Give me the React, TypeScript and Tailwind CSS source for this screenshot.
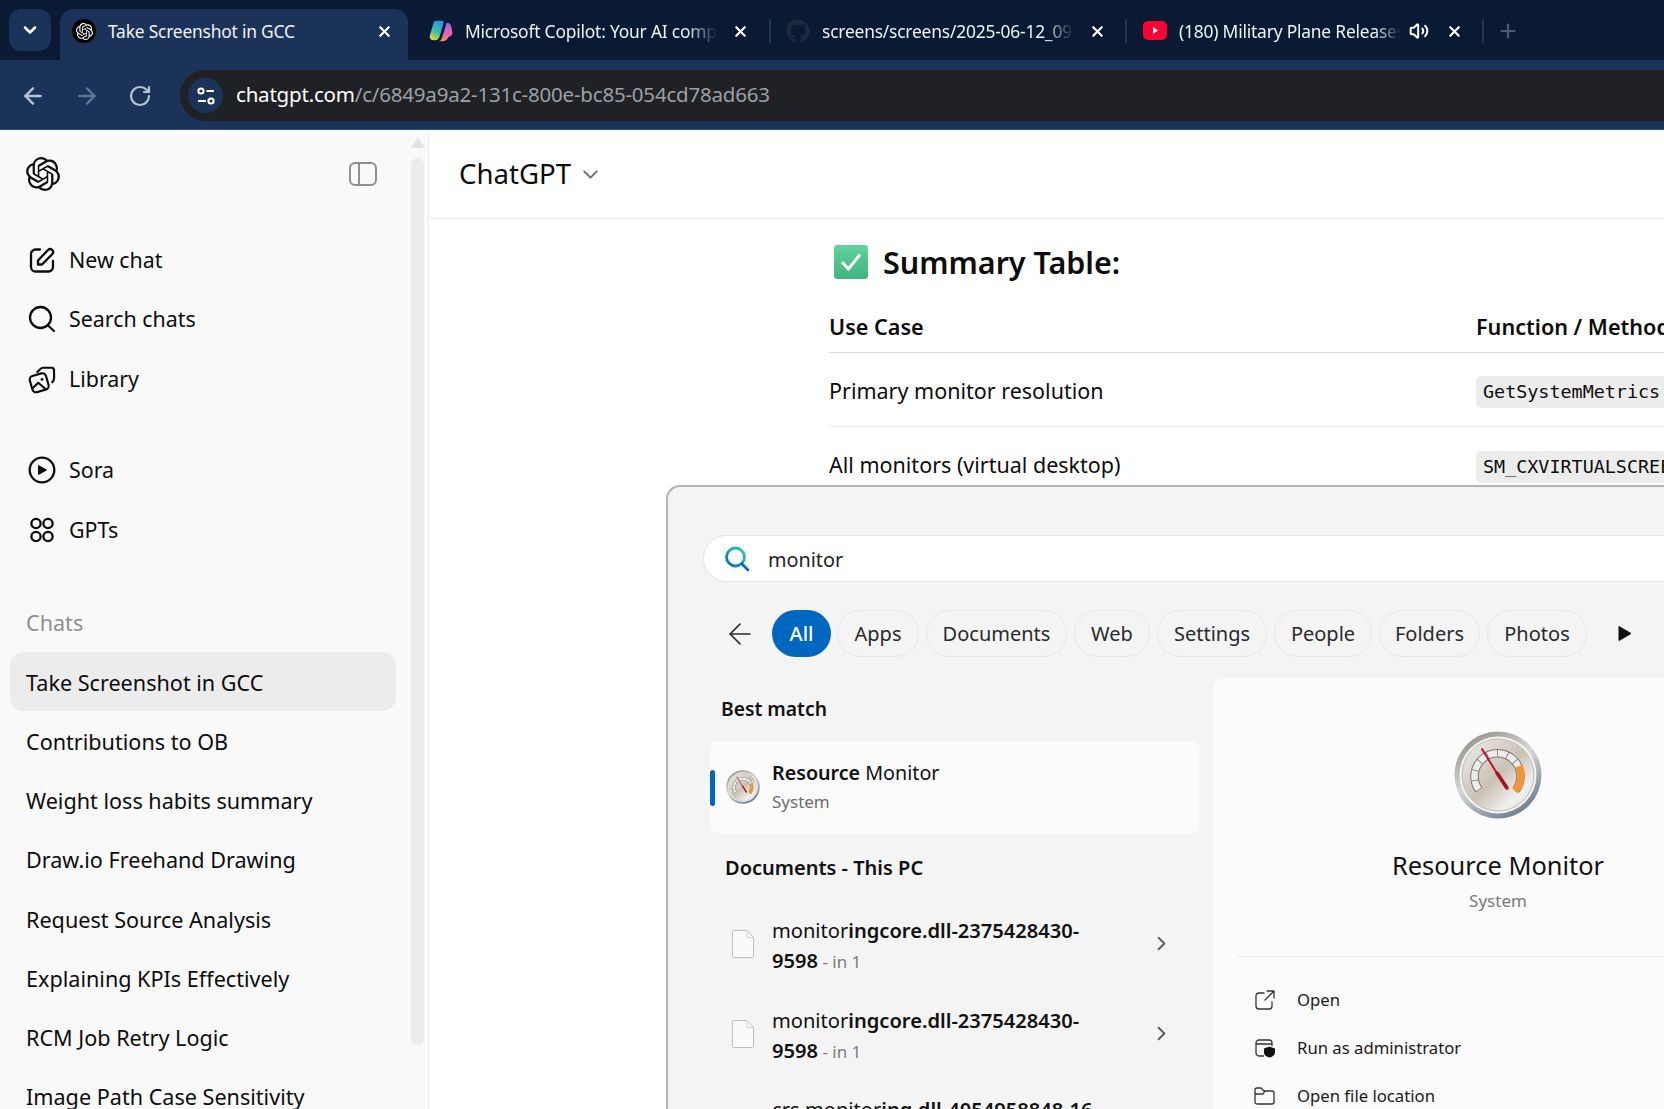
import { ChevronDown, ChevronRight, ArrowLeft, ArrowRight, RotateCw, X, Plus, Volume2 } from 'lucide-react'
import { SiOpenai } from 'react-icons/si'
import { FaGithub } from 'react-icons/fa'
import type { ReactNode } from 'react'

const ui = "font-['Noto_Sans','Open_Sans',sans-serif]"

function SettingsGlyph() {
  return (
    <svg width="20" height="20" viewBox="0 0 20 20" fill="none" stroke="white" strokeWidth="2">
      <circle cx="5" cy="5" r="2.6" />
      <path d="M10.5 5H18M2 15h8" />
      <circle cx="15" cy="15" r="2.6" />
    </svg>
  )
}

function CopilotIcon() {
  return (
    <svg width="26" height="24" viewBox="0 0 26 24">
      <defs>
        <linearGradient id="cpA" x1="0.7" y1="0" x2="0.2" y2="1">
          <stop offset="0" stopColor="#2a8ff0" />
          <stop offset="0.55" stopColor="#35c6a0" />
          <stop offset="1" stopColor="#f2d531" />
        </linearGradient>
        <linearGradient id="cpB" x1="0.6" y1="0" x2="0.4" y2="1">
          <stop offset="0" stopColor="#9a63ee" />
          <stop offset="0.55" stopColor="#ee5fb4" />
          <stop offset="1" stopColor="#f8913a" />
        </linearGradient>
      </defs>
      <path d="M8 1h6c2 0 2 2 1.500 3.500L11.500 18c-.6 2-2 4-4.500 4H5C1.500 22 .3 19.500 1 17L4.500 4.500C5 2.500 6 1 8 1z" fill="url(#cpA)" />
      <path d="M19 3c3 0 4.500 1.500 5.200 4.500l1 5c.6 3.500-1 5.500-3.700 5.500l-1.500 2.500c-.8 1.300-2 2.500-4 2.500h-6c2 0 3-1 3.800-3l4.200-13c.5-2 1-4 1-4z" fill="url(#cpB)" />
    </svg>
  )
}

function YouTubeIcon() {
  return (
    <svg width="24" height="24" viewBox="0 0 24 24">
      <rect x="0" y="2" width="24" height="19" rx="5" fill="#ff0033" />
      <path d="M10 8l5 3.500-5 3.500z" fill="white" />
    </svg>
  )
}

function CloseTab() {
  return <X size={17} strokeWidth={3} className="text-white shrink-0" />
}

function TabSeparator() {
  return <div className="w-[2px] h-[24px] bg-[#1f3656] shrink-0" />
}

function Tab({ icon, title, width, end }: { icon: ReactNode; title: string; width: string; end?: ReactNode }) {
  return (
    <div className="flex items-center h-[44px] shrink-0">
      <div className="w-[24px] h-[24px] flex items-center justify-center shrink-0">{icon}</div>
      <span className={`ml-[12px] ${width} overflow-hidden whitespace-nowrap text-[17.4px] tracking-[-0.2px] text-[#eef1f6] [mask-image:linear-gradient(to_right,black_88%,transparent)]`}>
        {title}
      </span>
      {end}
    </div>
  )
}

function TabStrip() {
  return (
    <div className="h-[60px] bg-[#0a1a33] flex items-start pt-[9px] pl-[9px] shrink-0">
      <div className="w-[42px] h-[42px] rounded-[12px] bg-[#1b3358] flex items-center justify-center">
        <ChevronDown size={20} strokeWidth={3} className="text-white" />
      </div>
      <div className="ml-[9px] w-[348px] h-[51px] rounded-t-[14px] bg-[#1b3358] flex items-center pb-[7px] pl-[12px] pr-[15px] text-[17.4px] tracking-[-0.2px] text-[#eef1f6]">
        <div className="w-[24px] h-[24px] rounded-full bg-black flex items-center justify-center">
          <SiOpenai size={17} className="text-white" />
        </div>
        <span className="ml-[12px] flex-1">Take Screenshot in GCC</span>
        <CloseTab />
      </div>
      <div className="ml-[21px] flex items-center h-[44px]">
        <Tab icon={<CopilotIcon />} title="Microsoft Copilot: Your AI companion" width="w-[252px]" />
        <div className="ml-[15px] mr-[15px] flex items-center gap-[20px]">
          <CloseTab />
          <TabSeparator />
        </div>
        <Tab icon={<FaGithub size={24} className="text-[#1c2a3f]" />} title="screens/screens/2025-06-12_09-10" width="w-[252px]" />
        <div className="ml-[15px] mr-[16px] flex items-center gap-[19px]">
          <CloseTab />
          <TabSeparator />
        </div>
        <Tab icon={<YouTubeIcon />} title="(180) Military Plane Releases Flares" width="w-[222px]" />
        <Volume2 size={20} strokeWidth={2.4} className="ml-[8px] text-white" />
        <div className="ml-[17px] flex items-center gap-[19px]">
          <CloseTab />
          <TabSeparator />
        </div>
        <Plus size={22} strokeWidth={2.4} className="ml-[13px] text-[#4a5a72]" />
      </div>
    </div>
  )
}

function Toolbar() {
  return (
    <div className="h-[70px] bg-[#1b3358] border-b-[1px] border-[#3a4d6c] flex items-start pt-[10px] shrink-0">
      <div className="flex items-center h-[51px] pl-[20px] gap-[28px] w-[180px]">
        <ArrowLeft size={26} strokeWidth={2.2} className="text-[#b6c4da]" />
        <ArrowRight size={26} strokeWidth={2.2} className="text-[#5f7594]" />
        <RotateCw size={24} strokeWidth={2.2} className="text-[#b6c4da]" />
      </div>
      <div className="flex-1 h-[51px] bg-[#202124] rounded-l-full flex items-center pl-[8px]">
        <div className="w-[35px] h-[35px] rounded-full bg-[#1b3358] flex items-center justify-center">
          <SettingsGlyph />
        </div>
        <div className="ml-[13px] pb-[2px] text-[20.5px] tracking-[-0.2px] whitespace-nowrap">
          <span className="text-white">chatgpt.com</span>
          <span className="text-[#9aa0a6]">/c/6849a9a2-131c-800e-bc85-054cd78ad663</span>
        </div>
      </div>
    </div>
  )
}

function NewChatIcon() {
  return (
    <svg width="28" height="28" viewBox="0 0 28 28" fill="none" stroke="#0d0d0d" strokeWidth="2.3" strokeLinecap="round" strokeLinejoin="round">
      <path d="M12 3.500H7.500A4.500 4.500 0 0 0 3 8v13a4.500 4.500 0 0 0 4.500 4.500h13A4.500 4.500 0 0 0 25 21v-6" />
      <path d="M10 18.500v-4L20 4a3 3 0 0 1 4.200 0 3 3 0 0 1 0 4.200L14 18.500z" />
    </svg>
  )
}

function SearchIcon() {
  return (
    <svg width="28" height="28" viewBox="0 0 28 28" fill="none" stroke="#0d0d0d" strokeWidth="2.3" strokeLinecap="round">
      <circle cx="12.500" cy="12.500" r="10.500" />
      <path d="M20 20.500l6 5.500" />
    </svg>
  )
}

function LibraryIcon() {
  return (
    <svg width="30" height="30" viewBox="0 0 30 30" fill="none" stroke="#0d0d0d" strokeWidth="2.3" strokeLinecap="round" strokeLinejoin="round">
      <path d="M10 7.500 13 4.500c1-1 2-1.500 3-1.500h9c1.500-.2 2.500.5 2.800 2l.2 9c0 1.800-.8 3.200-2 4.500" />
      <rect x="3" y="10" width="18" height="18" rx="4" transform="rotate(-16 12 19)" />
      <path d="M5 25l6-6 8 7" />
      <circle cx="15" cy="15.500" r="1.500" fill="#0d0d0d" stroke="none" />
    </svg>
  )
}

function SoraIcon() {
  return (
    <svg width="28" height="28" viewBox="0 0 28 28" fill="none">
      <circle cx="14" cy="14" r="12.300" stroke="#0d0d0d" strokeWidth="2.3" />
      <path d="M10.500 9.500v9l8-4.500z" fill="#0d0d0d" stroke="#0d0d0d" strokeLinejoin="round" />
    </svg>
  )
}

function GptsIcon() {
  return (
    <svg width="28" height="28" viewBox="0 0 28 28" fill="none" stroke="#0d0d0d" strokeWidth="2.3">
      <circle cx="8" cy="7.500" r="4.600" />
      <circle cx="20" cy="7.500" r="4.600" />
      <circle cx="8" cy="20.500" r="4.600" />
      <circle cx="20" cy="20.500" r="4.600" />
    </svg>
  )
}

function PanelIcon() {
  return (
    <svg width="28" height="24" viewBox="0 0 28 24" fill="none" stroke="#8f8f8f" strokeWidth="2">
      <rect x="1" y="1" width="26" height="22" rx="5" />
      <path d="M10 1v22" />
    </svg>
  )
}

function NavRow({ icon, label }: { icon: ReactNode; label: string }) {
  return (
    <div className="h-[59.5px] flex items-center pl-[28px] text-[#0d0d0d]">
      <div className="w-[28px] flex justify-center shrink-0">{icon}</div>
      <span className="ml-[13px] text-[21.4px]">{label}</span>
    </div>
  )
}

const chats = [
  'Take Screenshot in GCC',
  'Contributions to OB',
  'Weight loss habits summary',
  'Draw.io Freehand Drawing',
  'Request Source Analysis',
  'Explaining KPIs Effectively',
  'RCM Job Retry Logic',
  'Image Path Case Sensitivity',
]

function Sidebar() {
  return (
    <aside className="w-[429px] shrink-0 bg-[#f9f9f9] border-r border-[#ececec] flex overflow-hidden">
      <div className="w-[411px] shrink-0">
        <div className="h-[100px] pt-[27px] pl-[26px] pr-[34px] flex items-start justify-between">
          <SiOpenai size={34} className="text-[#0d0d0d]" />
          <div className="pt-[5px]">
            <PanelIcon />
          </div>
        </div>
        <NavRow icon={<NewChatIcon />} label="New chat" />
        <NavRow icon={<SearchIcon />} label="Search chats" />
        <NavRow icon={<LibraryIcon />} label="Library" />
        <div className="h-[32px]" />
        <NavRow icon={<SoraIcon />} label="Sora" />
        <NavRow icon={<GptsIcon />} label="GPTs" />
        <div className="h-[33px]" />
        <div className="h-[59px] flex items-center pt-[2px] pl-[26px] text-[21.6px] text-[#8f8f8f]">Chats</div>
        <div className="pl-[10px] pr-[15px]">
          {chats.map((c, i) => (
            <div
              key={c}
              className={`h-[59.2px] flex items-center pl-[16px] pt-[4px] rounded-[14px] text-[21.6px] text-[#0d0d0d] whitespace-nowrap ${i === 0 ? 'bg-[#ececec]' : ''}`}
            >
              {c}
            </div>
          ))}
        </div>
      </div>
      <div className="w-[13px] shrink-0 flex flex-col items-center pt-[7px]">
        <div className="w-0 h-0 border-x-[7px] border-x-transparent border-b-[11px] border-b-[#e3e3e3]" />
        <div className="mt-[10px] w-[13px] h-[887px] rounded-full bg-[#ececec]" />
      </div>
    </aside>
  )
}

function CheckEmoji() {
  return (
    <svg width="36" height="36" viewBox="0 0 36 36" className="shrink-0">
      <defs>
        <linearGradient id="checkBg" x1="0" y1="0" x2="0" y2="1">
          <stop offset="0" stopColor="#62d39c" />
          <stop offset="1" stopColor="#3fb57d" />
        </linearGradient>
      </defs>
      <rect x="1" y="1" width="34" height="34" rx="3.500" fill="url(#checkBg)" />
      <path d="M9 18l6.500 7L27 10.500" fill="none" stroke="white" strokeWidth="3" />
    </svg>
  )
}

function CodeChip({ children }: { children: string }) {
  return (
    <span className="w-[300px] h-[32px] rounded-[5px] bg-[#ececec] pl-[7px] flex items-center font-['DejaVu_Sans_Mono',monospace] text-[18.4px] text-[#0d0d0d] whitespace-nowrap">
      {children}
    </span>
  )
}

function MainPane() {
  return (
    <main className="flex-1 min-w-0 bg-white overflow-hidden">
      <div className="h-[89px] border-b border-[#ececec] flex items-center pl-[30px] text-[#0d0d0d]">
        <span className="text-[27.6px]">ChatGPT</span>
        <ChevronDown size={25} strokeWidth={1.8} className="ml-[7px] mt-[1px] text-[#6b6b6b]" />
      </div>
      <div className="pl-[400px] w-[1400px]">
        <div className="pt-[25px] flex items-center pl-[4px] text-[#0d0d0d]">
          <CheckEmoji />
          <h2 className="ml-[14px] text-[30.5px] font-semibold leading-[36px]">Summary Table:</h2>
        </div>
        <div className="mt-[20px] grid grid-cols-[647px_1fr] text-[#0d0d0d]">
          <div className="h-[53px] pt-[3px] flex items-center border-b border-[#d9d9d9] text-[21.6px] font-semibold">Use Case</div>
          <div className="h-[53px] pt-[3px] flex items-center border-b border-[#d9d9d9] text-[21.6px] font-semibold whitespace-nowrap">Function / Method</div>
          <div className="h-[74px] pt-[4px] flex items-center border-b border-[#ececec] text-[21.5px]">Primary monitor resolution</div>
          <div className="h-[74px] pt-[5px] flex items-center border-b border-[#ececec]">
            <CodeChip>GetSystemMetrics</CodeChip>
          </div>
          <div className="h-[74px] pt-[2px] flex items-center text-[21.5px]">All monitors (virtual desktop)</div>
          <div className="h-[74px] pt-[5px] flex items-center">
            <CodeChip>SM_CXVIRTUALSCREEN</CodeChip>
          </div>
        </div>
      </div>
    </main>
  )
}

function GaugeIcon({ id, size }: { id: string; size: number }) {
  return (
    <svg width={size} height={size} viewBox="0 0 88 88">
      <defs>
        <linearGradient id={`${id}Rim`} x1="0.2" y1="0" x2="0.8" y2="1">
          <stop offset="0" stopColor="#8f8f8b" />
          <stop offset="0.45" stopColor="#d8d8d4" />
          <stop offset="1" stopColor="#5f7488" />
        </linearGradient>
        <linearGradient id={`${id}Face`} x1="0" y1="0" x2="1" y2="1">
          <stop offset="0" stopColor="#f1f0ec" />
          <stop offset="0.5" stopColor="#cbc1b5" />
          <stop offset="0.78" stopColor="#f0f0ec" />
          <stop offset="1" stopColor="#d5d3cf" />
        </linearGradient>
      </defs>
      <circle cx="44" cy="44" r="43.500" fill={`url(#${id}Rim)`} />
      <circle cx="44" cy="44" r="38.500" fill="#f3f3f0" />
      <circle cx="44" cy="44" r="36" fill={`url(#${id}Face)`} stroke="#bdbdb9" />
      <path d="M25 59A23 23 0 1 1 62 59" fill="none" stroke="#77777a" strokeWidth="8.500" />
      <path d="M25 59A23 23 0 1 1 62 59" fill="none" stroke="#eeede9" strokeWidth="6.500" />
      <path d="M25 59A23 23 0 1 1 62 59" fill="none" stroke="#77777a" strokeWidth="7" strokeDasharray="0.8 9.200" />
      <path d="M65 35A23 23 0 0 1 61 60" fill="none" stroke="#f0953a" strokeWidth="7.500" />
      <path d="M28 18L52 57" stroke="#c5102a" strokeWidth="2" strokeLinecap="round" />
      <path d="M43 42L53 57" stroke="#b00d25" strokeWidth="3.500" strokeLinecap="round" />
    </svg>
  )
}

function FileIcon() {
  return (
    <svg width="22" height="28" viewBox="0 0 22 28" fill="#fafafa" stroke="#bdbdbd" className="shrink-0 mb-[5px]">
      <path d="M.5 1.500a1 1 0 0 1 1-1H15l6.500 7v19a1 1 0 0 1-1 1h-19a1 1 0 0 1-1-1z" />
      <path d="M15 .5v7h6.500" fill="none" stroke="#d4d4d4" />
    </svg>
  )
}

function SearchGlyph() {
  return (
    <svg width="26" height="26" viewBox="0 0 26 26" fill="none" strokeWidth="2.800" strokeLinecap="round">
      <defs>
        <linearGradient id="searchStroke" x1="1" y1="0" x2="0" y2="1">
          <stop offset="0" stopColor="#39d08a" />
          <stop offset="0.5" stopColor="#1a9fd0" />
          <stop offset="1" stopColor="#0067c0" />
        </linearGradient>
      </defs>
      <circle cx="11.500" cy="11" r="9" stroke="url(#searchStroke)" />
      <path d="M18 18l6 6" stroke="#0067c0" />
    </svg>
  )
}

function FileRow({ name, rest }: { name: string; rest: string }) {
  return (
    <div className="h-[90px] flex items-center pl-[22px] pr-[26px] shrink-0">
      <FileIcon />
      <div className="ml-[18px] flex-1 text-[20.1px] leading-[30px] text-[#111]">
        <div>
          monitor<span className="font-semibold">{name}</span>
        </div>
        <div>
          <span className="font-semibold">{rest}</span>
          <span className="text-[17px] text-[#7c7c7c]"> - in 1</span>
        </div>
      </div>
      <ChevronRight size={23} strokeWidth={2} className="mb-[5px] text-[#5c5c5c]" />
    </div>
  )
}

function ActionRow({ icon, label }: { icon: ReactNode; label: string }) {
  return (
    <div className="h-[48px] flex items-center pl-[40px] text-[16.7px] text-[#1a1a1a]">
      <div className="w-[24px] flex justify-center shrink-0">{icon}</div>
      <span className="ml-[20px]">{label}</span>
    </div>
  )
}

const filters = [
  ['Apps', 'w-[82px]'],
  ['Documents', 'w-[141px]'],
  ['Web', 'w-[76px]'],
  ['Settings', 'w-[110px]'],
  ['People', 'w-[98px]'],
  ['Folders', 'w-[101px]'],
  ['Photos', 'w-[100px]'],
]

function StartMenu() {
  return (
    <div className="absolute left-[666px] top-[485px] w-[1100px] h-[700px] bg-[#f4f4f4] rounded-tl-[14px] border-l-[2px] border-t-[2px] border-[#b4b4b4] overflow-hidden">
      <div className="mt-[48px] ml-[35px] h-[47px] bg-white rounded-l-full border border-[#e4e4e4] flex items-center pl-[20px]">
        <SearchGlyph />
        <span className="ml-[18px] pt-[3px] text-[19.8px] text-[#222]">monitor</span>
      </div>
      <div className="mt-[28px] ml-[55px] flex items-center h-[47px] text-[20px] text-[#2a2a2a]">
        <ArrowLeft size={34} strokeWidth={1.1} className="mr-[15px] shrink-0" />
        <div className="w-[59px] h-[47px] rounded-full bg-[#0067c0] text-white font-medium flex items-center justify-center">All</div>
        <div className="ml-[6px] flex gap-[7px]">
          {filters.map(([label, width]) => (
            <div key={label} className={`${width} h-[47px] rounded-full border border-[#e6e6e6] flex items-center justify-center`}>
              {label}
            </div>
          ))}
        </div>
        <svg width="14" height="17" viewBox="0 0 14 17" className="ml-[31px]">
          <path d="M1 1.500v14L13 8.500z" fill="#111" stroke="#111" strokeLinejoin="round" />
        </svg>
      </div>
      <div className="mt-[21px] flex items-start">
        <div className="w-[489px] ml-[42px] shrink-0 pt-[15px]">
          <div className="h-[32px] pl-[11px] flex items-center text-[19.3px] font-semibold text-[#111]">Best match</div>
          <div className="mt-[16px] h-[92px] rounded-[6px] bg-[#fbfbfb] flex items-center relative pl-[16px]">
            <div className="absolute left-0 top-[29px] w-[5px] h-[36px] rounded-full bg-[#0067c0]" />
            <GaugeIcon id="gaugeSmall" size={34} />
            <div className="ml-[12px] mt-[-1px]">
              <div className="text-[19.7px] leading-[30px] text-[#111]">
                <span className="font-semibold">Resource</span> Monitor
              </div>
              <div className="text-[17px] leading-[28px] text-[#6e6e6e]">System</div>
            </div>
          </div>
          <div className="mt-[19px] h-[32px] pl-[15px] flex items-center text-[20px] font-semibold text-[#111]">Documents - This PC</div>
          <div className="mt-[17px]">
            <FileRow name="ingcore.dll-2375428430-" rest="9598" />
            <FileRow name="ingcore.dll-2375428430-" rest="9598" />
            <div className="pl-[62px] pt-[14px] text-[20.1px] leading-[30px] text-[#111] whitespace-nowrap">
              crs.monitor<span className="font-semibold">ing.dll-4054958848-16</span>
            </div>
          </div>
        </div>
        <div className="ml-[14px] flex-1 h-[500px] bg-[#fbfbfb] rounded-tl-[12px]">
          <div className="w-[570px]">
            <div className="pt-[53px] flex flex-col items-center">
              <GaugeIcon id="gaugeLarge" size={88} />
              <div className="mt-[29px] text-[25.4px] leading-[34px] text-[#111]">Resource Monitor</div>
              <div className="mt-[7px] text-[17px] leading-[24px] text-[#7a7a7a]">System</div>
            </div>
            <div className="mt-[43px] ml-[24px] w-[546px] border-t border-[#ebebeb]" />
            <div className="mt-[19px]">
              <ActionRow
                label="Open"
                icon={
                  <svg width="20" height="20" viewBox="0 0 20 20" fill="none" stroke="#333" strokeWidth="1.300" strokeLinecap="round" strokeLinejoin="round">
                    <path d="M9 3H4a3 3 0 0 0-3 3v10a3 3 0 0 0 3 3h10a3 3 0 0 0 3-3v-4" />
                    <path d="M12 1h7v7M19 1l-9 9" />
                  </svg>
                }
              />
              <ActionRow
                label="Run as administrator"
                icon={
                  <svg width="21" height="20" viewBox="0 0 21 20" fill="none" stroke="#333" strokeWidth="1.300">
                    <path d="M9 18H4a3 3 0 0 1-3-3V5a3 3 0 0 1 3-3h10a3 3 0 0 1 3 3v3M1 6h16" />
                    <path d="M14.500 8.500l5.500 2v4c0 2.500-2.500 4.500-5.500 5-3-.5-5.500-2.500-5.500-5v-4z" fill="#111" stroke="none" />
                  </svg>
                }
              />
              <ActionRow
                label="Open file location"
                icon={
                  <svg width="22" height="18" viewBox="0 0 22 18" fill="none" stroke="#333" strokeWidth="1.300" strokeLinejoin="round">
                    <path d="M1 15V3a2 2 0 0 1 2-2h4l3 3h8a2 2 0 0 1 2 2v9a2 2 0 0 1-2 2H3a2 2 0 0 1-2-2z" />
                    <path d="M1 7h8l2-3" />
                  </svg>
                }
              />
            </div>
          </div>
        </div>
      </div>
    </div>
  )
}

export default function App() {
  return (
    <div className={`relative w-[1664px] h-[1109px] overflow-hidden flex flex-col bg-white ${ui}`}>
      <TabStrip />
      <Toolbar />
      <div className="flex-1 min-h-0 flex">
        <Sidebar />
        <MainPane />
      </div>
      <StartMenu />
    </div>
  )
}
